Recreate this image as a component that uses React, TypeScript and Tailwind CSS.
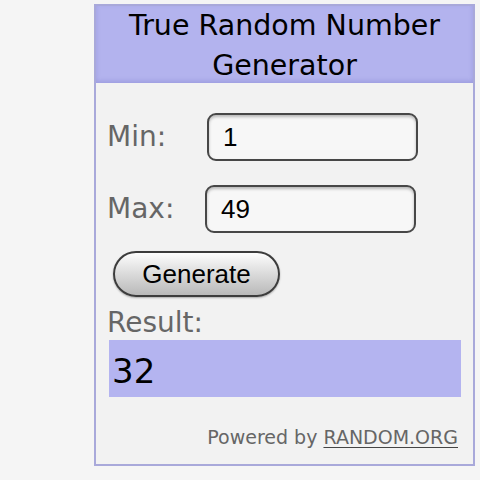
import React from 'react';

const label = "font-['DejaVu_Sans',sans-serif] text-[28px] leading-[32px] text-[#666666]";
const field =
  "flex items-center w-[211px] h-[48px] pl-[14px] rounded-[9px] border-2 border-[#474747] bg-[#f7f7f7] shadow-[inset_0_2px_3px_rgba(0,0,0,0.25)] font-['Liberation_Sans',Arial,sans-serif] text-[26px] text-black";

export default function App() {
  return (
    <div className="w-[480px] h-[480px] bg-[#f5f5f5] pl-[94px] pt-[4px]">
      <div className="w-[381px] h-[462px] border-2 border-[#a9a9da] bg-[#f2f2f2] flex flex-col">
        <div className="h-[77px] bg-[#b3b3ee] text-center font-['DejaVu_Sans',sans-serif] text-[28.5px] leading-[40px] text-black shadow-[inset_0_-2px_4px_rgba(90,90,180,0.25)]">
          True Random Number
          <br />
          Generator
        </div>

        <div className="flex flex-col pl-[11px] pr-[12px]">
          <div className="flex items-center mt-[30px] h-[48px]">
            <span className={`${label} w-[100px]`}>Min:</span>
            <div className={field}>1</div>
          </div>

          <div className="flex items-center mt-[24px] h-[48px]">
            <span className={`${label} w-[98px]`}>Max:</span>
            <div className={field}>49</div>
          </div>

          <button className="mt-[18px] ml-[6px] w-[167px] h-[46px] rounded-full border-2 border-[#3c3c3c] bg-linear-to-b from-[#fdfdfd] to-[#b9b9b9] font-['Liberation_Sans',Arial,sans-serif] text-[26px] text-black shadow-[0_1px_2px_rgba(0,0,0,0.3)]">
            Generate
          </button>

          <div className={`${label} mt-[10px]`}>Result:</div>

          <div className="mt-[1px] ml-[2px] w-[352px] h-[57px] bg-[#b4b4f0] pl-[3px] pt-[11px] font-['DejaVu_Sans',sans-serif] text-[34px] leading-[40px] text-black">
            32
          </div>

          <div className="mt-[29px] pr-[3px] text-right font-['DejaVu_Sans',sans-serif] text-[19px] leading-[22px] text-[#666666]">
            Powered by <span className="underline underline-offset-[3px] decoration-[#444444]">RANDOM.ORG</span>
          </div>
        </div>
      </div>
    </div>
  );
}
